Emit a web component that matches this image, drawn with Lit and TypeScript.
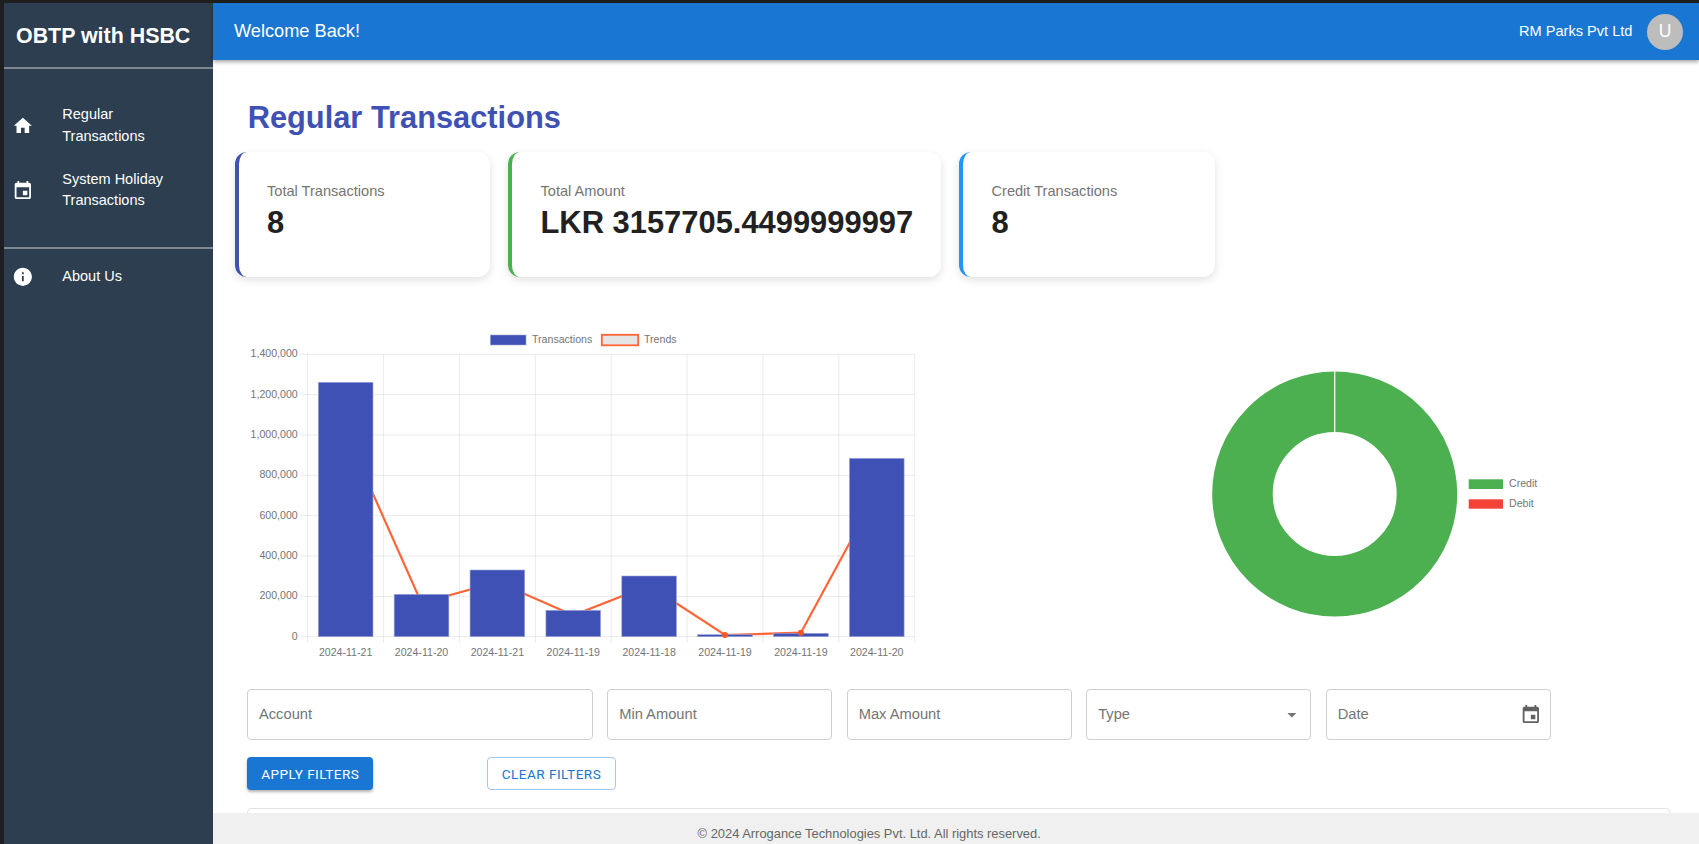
import { LitElement, html, svg, css } from "lit";
import { customElement } from "lit/decorators.js";

const ICONS = {
  home: "M10 20v-6h4v6h5v-8h3L12 3 2 12h3v8z",
  event: "M17 12h-5v5h5v-5zM16 1v2H8V1H6v2H5c-1.11 0-1.99.9-1.99 2L3 19c0 1.1.89 2 2 2h14c1.1 0 2-.9 2-2V5c0-1.1-.9-2-2-2h-1V1h-2zm3 18H5V8h14v11z",
  info: "M12 2C6.48 2 2 6.48 2 12s4.48 10 10 10 10-4.48 10-10S17.52 2 12 2zm1 15h-2v-6h2v6zm0-8h-2V7h2v2z",
  drop: "M7 10l5 5 5-5z",
};

const icon = (name: keyof typeof ICONS, cls: string) =>
  html`<svg class=${cls} viewBox="0 0 24 24" aria-hidden="true"><path d=${ICONS[name]}></path></svg>`;

const PLOT = { left: 307.7, right: 914.7, top: 354.3, bottom: 636.7 };
const STEP_X = (PLOT.right - PLOT.left) / 8;
const STEP_Y = (PLOT.bottom - PLOT.top) / 7;
const Y_LABELS = ["1,400,000", "1,200,000", "1,000,000", "800,000", "600,000", "400,000", "200,000", "0"];
const BARS = [
  { date: "2024-11-21", top: 382.3, trend: 432.3 },
  { date: "2024-11-20", top: 594.3, trend: 603 },
  { date: "2024-11-21", top: 570, trend: 582 },
  { date: "2024-11-19", top: 610.3, trend: 615.3 },
  { date: "2024-11-18", top: 576, trend: 585.5 },
  { date: "2024-11-19", top: 634.7, trend: 635 },
  { date: "2024-11-19", top: 633.3, trend: 632.7 },
  { date: "2024-11-20", top: 458.3, trend: 492.9 },
];
const cx = (i: number) => PLOT.left + STEP_X * (i + 0.5);

function barChart() {
  const trend = BARS.map((b, i) => `${cx(i).toFixed(1)},${b.trend}`).join(" ");
  return html`<svg class="bar-chart" viewBox="235 320 700 340">
    ${Y_LABELS.map((label, i) => {
      const y = PLOT.top + STEP_Y * i;
      return svg`<line class="grid" x1="300" x2=${PLOT.right} y1=${y} y2=${y}></line>
        <text class="tick" x="297.7" y=${y + 3.1} text-anchor="end">${label}</text>`;
    })}
    ${Array.from({ length: 9 }, (_, i) => {
      const x = PLOT.left + STEP_X * i;
      return svg`<line class="grid" x1=${x} x2=${x} y1=${PLOT.top} y2="643"></line>`;
    })}
    <polyline class="trend" points=${trend}></polyline>
    ${BARS.map(
      (b, i) => svg`<rect class="bar" x=${cx(i) - 27.35} y=${b.top} width="54.7" height=${PLOT.bottom - b.top}></rect>
        <text class="tick" x=${cx(i)} y="656" text-anchor="middle">${b.date}</text>`
    )}
    ${BARS.slice(5, 7).map((b, i) => svg`<circle class="dot" cx=${cx(i + 5)} cy=${b.trend} r="3"></circle>`)}
    <rect class="bar" x="490.3" y="335" width="35.7" height="10"></rect>
    <text class="tick" x="532" y="343.3">Transactions</text>
    <rect class="trend-key" x="601.8" y="334.8" width="36.4" height="10.5"></rect>
    <text class="tick" x="644" y="343.3">Trends</text>
  </svg>`;
}

function donut() {
  return html`<svg class="donut" viewBox="1190 320 380 340">
    <circle class="ring" cx="1334.7" cy="494" r="92.25"></circle>
    <line class="seam" x1="1334.7" x2="1334.7" y1="371" y2="432"></line>
    <rect class="key-credit" x="1468.7" y="479.3" width="34.3" height="9.7"></rect>
    <text class="tick" x="1509" y="487.1">Credit</text>
    <rect class="key-debit" x="1468.7" y="499.3" width="34.3" height="9.4"></rect>
    <text class="tick" x="1509" y="507.3">Debit</text>
  </svg>`;
}

@customElement("app-root")
export class AppRoot extends LitElement {
  static styles = css`
    :host {
      display: flex;
      height: 844px;
      box-sizing: border-box;
      padding: 3px 0 0 4px;
      background: #1e1e1e;
      font-family: "Liberation Sans", Arial, sans-serif;
      overflow: hidden;
    }
    .sidebar {
      flex: 0 0 209px;
      background: #2c3e50;
      color: #fff;
      display: flex;
      flex-direction: column;
    }
    .brand {
      height: 65.5px;
      display: flex;
      align-items: center;
      padding: 3px 0 0 12px;
      font-size: 21.4px;
      font-weight: 700;
      border-bottom: 2px solid rgba(255, 255, 255, 0.38);
      box-sizing: border-box;
      flex: none;
    }
    .nav {
      list-style: none;
      margin: 0;
      padding: 0;
    }
    .nav-main {
      padding-top: 35.8px;
      padding-bottom: 13.9px;
      border-bottom: 2px solid rgba(255, 255, 255, 0.38);
    }
    .nav-about {
      padding-top: 16.85px;
    }
    .item {
      display: flex;
      align-items: center;
      font-size: 14.5px;
      line-height: 21.7px;
      min-height: 43.4px;
      margin-bottom: 21px;
      padding-left: 8px;
    }
    .item-single {
      min-height: 21.7px;
    }
    .nav-icon {
      flex: none;
      width: 21.7px;
      height: 21.7px;
      fill: #fff;
      margin-right: 28.6px;
    }
    .main {
      flex: 1;
      min-width: 0;
      display: flex;
      flex-direction: column;
      background: #fff;
      position: relative;
    }
    .header {
      flex: 0 0 57px;
      background: #1976d2;
      color: #fff;
      display: flex;
      align-items: center;
      justify-content: space-between;
      padding: 0 16px 0 21px;
      box-shadow: 0 2px 4px rgba(0, 0, 0, 0.35);
      position: relative;
      z-index: 2;
    }
    .welcome {
      font-size: 18.2px;
    }
    .user {
      display: flex;
      align-items: center;
      gap: 14.5px;
      font-size: 14.6px;
    }
    .user-name {
      padding-bottom: 2px;
    }
    .avatar {
      width: 36px;
      height: 36px;
      border-radius: 50%;
      background: #bdbdbd;
      color: #fff;
      display: flex;
      align-items: center;
      justify-content: center;
      font-size: 17.5px;
    }
    .content {
      flex: 1;
      min-height: 0;
      overflow: hidden;
      padding: 0 29px 0 21.6px;
    }
    .title {
      margin: 40px 0 0 13.1px;
      font-size: 30.8px;
      line-height: 36px;
      font-weight: 700;
      color: #3f51b5;
    }
    .cards {
      display: flex;
      gap: 18px;
      margin-top: 15.7px;
    }
    .card {
      box-sizing: border-box;
      height: 125.6px;
      padding: 30px 0 0 28.4px;
      border-left: 4px solid;
      border-radius: 12px;
      background: #fff;
      box-shadow: 0 3px 9px rgba(0, 0, 0, 0.12);
    }
    .c-indigo { border-left-color: #3f51b5; width: 255.5px; }
    .c-green { border-left-color: #4caf50; width: 433px; }
    .c-blue { border-left-color: #2196f3; width: 255.5px; }
    .card-label {
      font-size: 14.6px;
      line-height: 18px;
      color: #757575;
    }
    .card-value {
      margin-top: 4px;
      font-size: 30.9px;
      line-height: 38px;
      font-weight: 700;
      color: #212121;
    }
    .charts {
      display: flex;
      margin-top: 42.7px;
      height: 340px;
    }
    .bar-chart {
      width: 700px;
      height: 340px;
      flex: none;
    }
    .donut {
      width: 380px;
      height: 340px;
      flex: none;
      margin-left: 255px;
    }
    .tick {
      font-family: "Liberation Sans", Arial, sans-serif;
      font-size: 10.6px;
      fill: #757575;
    }
    .grid {
      stroke: rgba(0, 0, 0, 0.08);
      stroke-width: 1;
    }
    .bar {
      fill: #3f51b5;
      stroke: #9fa8da;
      stroke-width: 0.6;
    }
    .trend {
      fill: none;
      stroke: #ff6536;
      stroke-width: 2.2;
    }
    .dot {
      fill: #ff5722;
    }
    .trend-key {
      fill: #e5e5e5;
      stroke: #ff6536;
      stroke-width: 1.8;
    }
    .ring {
      fill: none;
      stroke: #4caf50;
      stroke-width: 60.5;
    }
    .seam {
      stroke: #fff;
      stroke-width: 1.4;
      opacity: 0.85;
    }
    .key-credit { fill: #4caf50; }
    .key-debit { fill: #f44336; }
    .filters {
      display: flex;
      gap: 14.5px;
      margin: 29.3px 0 0 12.4px;
    }
    .field {
      box-sizing: border-box;
      flex: 0 0 225px;
      height: 50.4px;
      border: 1px solid #cfcfcf;
      border-radius: 4px;
      display: flex;
      align-items: center;
      justify-content: space-between;
      padding: 0 8px 0 11px;
      font-size: 14.7px;
      color: #757575;
    }
    .field-wide {
      flex-basis: 345.7px;
    }
    .field-icon {
      width: 21.7px;
      height: 21.7px;
      fill: #616161;
      flex: none;
    }
    .field-drop {
      fill: #757575;
      margin-right: -1px;
    }
    .actions {
      display: flex;
      gap: 113.5px;
      margin: 17.6px 0 0 12.4px;
    }
    .btn {
      box-sizing: border-box;
      height: 32.7px;
      display: flex;
      align-items: center;
      justify-content: center;
      border-radius: 4px;
      font-family: Roboto, "Liberation Sans", sans-serif;
      font-weight: 400;
      font-size: 13.6px;
      letter-spacing: 0.45px;
      text-transform: uppercase;
    }
    .btn-primary {
      width: 126.5px;
      background: #1976d2;
      color: #fff;
      box-shadow: 0 2px 3px rgba(0, 0, 0, 0.3);
    }
    .btn-outline {
      width: 129px;
      background: #fff;
      border: 1px solid #a3c8ed;
      color: #1976d2;
    }
    .table-card {
      height: 200px;
      margin: 18.3px 0 0 12.4px;
      border: 1px solid #e4e4e4;
      border-radius: 4px;
    }
    .footer {
      flex: 0 0 30.7px;
      box-sizing: border-box;
      background: #f0f0f0;
      color: #666;
      font-size: 12.9px;
      display: flex;
      align-items: center;
      padding: 10px 0 0 484.6px;
      position: relative;
      z-index: 1;
    }
  `;

  render() {
    return html`
      <aside class="sidebar">
        <div class="brand">OBTP with HSBC</div>
        <ul class="nav nav-main">
          <li class="item">${icon("home", "nav-icon")}<span>Regular<br />Transactions</span></li>
          <li class="item">${icon("event", "nav-icon")}<span>System Holiday<br />Transactions</span></li>
        </ul>
        <ul class="nav nav-about">
          <li class="item item-single">${icon("info", "nav-icon")}<span>About Us</span></li>
        </ul>
      </aside>
      <div class="main">
        <header class="header">
          <div class="welcome">Welcome Back!</div>
          <div class="user">
            <span class="user-name">RM Parks Pvt Ltd</span>
            <div class="avatar">U</div>
          </div>
        </header>
        <section class="content">
          <h1 class="title">Regular Transactions</h1>
          <div class="cards">
            <div class="card c-indigo">
              <div class="card-label">Total Transactions</div>
              <div class="card-value">8</div>
            </div>
            <div class="card c-green">
              <div class="card-label">Total Amount</div>
              <div class="card-value">LKR 3157705.4499999997</div>
            </div>
            <div class="card c-blue">
              <div class="card-label">Credit Transactions</div>
              <div class="card-value">8</div>
            </div>
          </div>
          <div class="charts">${barChart()}${donut()}</div>
          <div class="filters">
            <div class="field field-wide">Account</div>
            <div class="field">Min Amount</div>
            <div class="field">Max Amount</div>
            <div class="field">Type${icon("drop", "field-icon field-drop")}</div>
            <div class="field">Date${icon("event", "field-icon")}</div>
          </div>
          <div class="actions">
            <div class="btn btn-primary">Apply Filters</div>
            <div class="btn btn-outline">Clear Filters</div>
          </div>
          <div class="table-card"></div>
        </section>
        <footer class="footer">© 2024 Arrogance Technologies Pvt. Ltd. All rights reserved.</footer>
      </div>
    `;
  }
}
